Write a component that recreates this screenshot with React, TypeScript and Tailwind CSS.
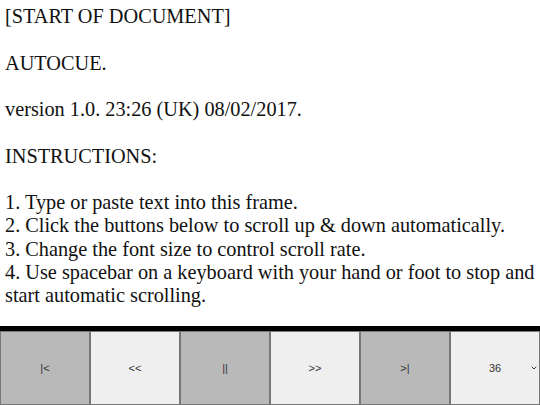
import { ChevronDown } from 'lucide-react'

const buttons = [
  { label: '|<', dim: true },
  { label: '<<', dim: false },
  { label: '||', dim: true },
  { label: '>>', dim: false },
  { label: '>|', dim: true },
]

export default function App() {
  return (
    <div className="w-[540px] h-[405px] flex flex-col bg-white overflow-hidden">
      {/* Script text */}
      <div className="flex-1 px-[5px] pt-[5px] text-[20.3px] leading-[23.25px] text-[#111] font-['Liberation_Serif',serif]">
        <p>[START OF DOCUMENT]</p>
        <br />
        <p>AUTOCUE.</p>
        <br />
        <p>version 1.0. 23:26 (UK) 08/02/2017.</p>
        <br />
        <p>INSTRUCTIONS:</p>
        <br />
        <p>1. Type or paste text into this frame.</p>
        <p>2. Click the buttons below to scroll up &amp; down automatically.</p>
        <p>3. Change the font size to control scroll rate.</p>
        <p>4. Use spacebar on a keyboard with your hand or foot to stop and start automatic scrolling.</p>
      </div>

      {/* Controls */}
      <div className="h-[79px] border-t-[5px] border-black grid grid-cols-6 font-['Liberation_Sans',sans-serif] text-[11px] text-[#333]">
        {buttons.map((b) => (
          <button
            key={b.label}
            className={`border border-[#767676] flex items-center justify-center ${b.dim ? 'bg-[#b9b9b9]' : 'bg-[#efefef]'}`}
          >
            {b.label}
          </button>
        ))}
        <div className="relative border border-[#767676] bg-[#efefef] flex items-center justify-center">
          <span>36</span>
          <ChevronDown className="absolute right-[1px] w-[8px] h-[8px]" strokeWidth={3} />
        </div>
      </div>
    </div>
  )
}
